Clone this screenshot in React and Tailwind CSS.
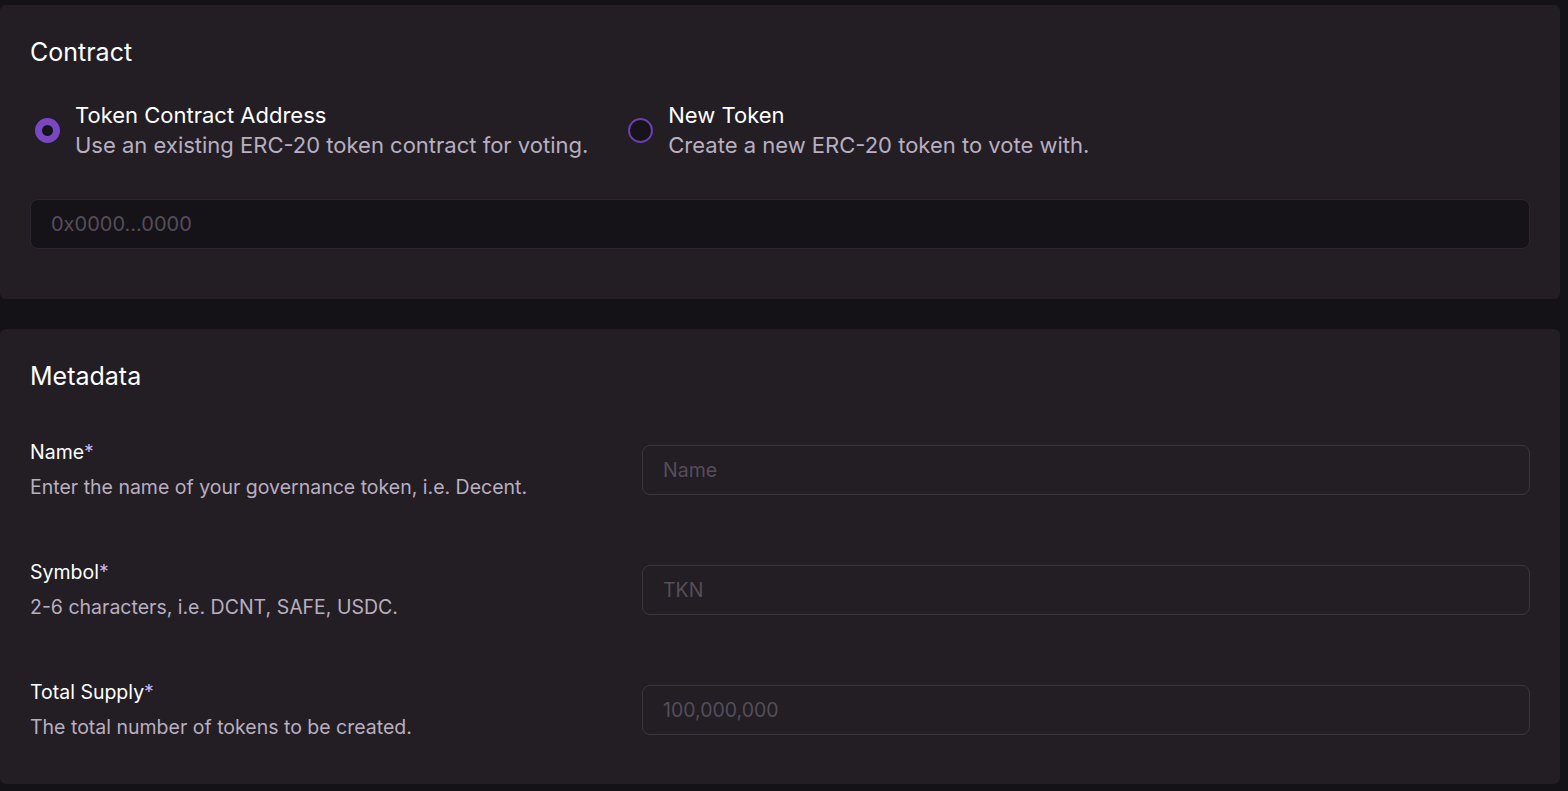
import React, { useState } from 'react';

const font = { fontFamily: 'Inter, "Noto Sans", sans-serif' };

const Radio = ({ checked }) => (
  <span
    className={`w-[25px] h-[25px] rounded-full shrink-0 box-border ${
      checked ? 'border-[7px] border-[#7a47c2] bg-[#16131a]' : 'border-2 border-[#6c3db3] bg-[#16131a]'
    }`}
  />
);

const fields = [
  { label: 'Name', help: 'Enter the name of your governance token, i.e. Decent.', placeholder: 'Name' },
  { label: 'Symbol', help: '2-6 characters, i.e. DCNT, SAFE, USDC.', placeholder: 'TKN' },
  { label: 'Total Supply', help: 'The total number of tokens to be created.', placeholder: '100,000,000' },
];

export default function App() {
  const [choice, setChoice] = useState('existing');

  return (
    <div className="min-h-[791px] w-full bg-[#141217] pt-[5px] pr-[8px] pb-[6px]" style={font}>
      {/* Contract card */}
      <div className="bg-[#221e24] rounded-[6px] px-[30px] pt-[31px] pb-[50px]">
        <h2 className="text-[25px] leading-[32px] text-white">Contract</h2>
        <div className="mt-[32px] flex items-center gap-[40px]">
          <label className="flex items-center gap-[15px] pl-[5px] cursor-pointer" onClick={() => setChoice('existing')}>
            <Radio checked={choice === 'existing'} />
            <div>
              <div className="text-[22px] leading-[30px] text-white">Token Contract Address</div>
              <div className="text-[22px] leading-[30px] text-[#b9afc0]">Use an existing ERC-20 token contract for voting.</div>
            </div>
          </label>
          <label className="flex items-center gap-[15px] cursor-pointer" onClick={() => setChoice('new')}>
            <Radio checked={choice === 'new'} />
            <div>
              <div className="text-[22px] leading-[30px] text-white">New Token</div>
              <div className="text-[22px] leading-[30px] text-[#b9afc0]">Create a new ERC-20 token to vote with.</div>
            </div>
          </label>
        </div>
        <input
          placeholder="0x0000...0000"
          className="mt-[39px] block w-full h-[50px] rounded-[8px] bg-[#151317] border border-[#2b2730] px-[20px] text-[20px] text-white placeholder:text-[#554d5b] outline-none"
        />
      </div>

      {/* Metadata card */}
      <div className="mt-[30px] bg-[#221e24] rounded-[6px] px-[30px] pt-[31px] pb-[43px]">
        <h2 className="text-[25px] leading-[32px] text-white">Metadata</h2>
        <div className="mt-[46px] flex flex-col gap-[57px]">
          {fields.map((f) => (
            <div key={f.label} className="grid grid-cols-[582px_1fr] gap-[30px] items-center">
              <div>
                <div className="text-[19.5px] leading-[28px] text-white">
                  {f.label}<span className="text-[#c9b6f2]">*</span>
                </div>
                <div className="mt-[7px] text-[19.5px] leading-[28px] text-[#b9afc0]">{f.help}</div>
              </div>
              <input
                placeholder={f.placeholder}
                className="block w-full h-[50px] rounded-[8px] bg-transparent border border-[#3b363e] px-[20px] text-[19.5px] text-white placeholder:text-[#554d5b] outline-none"
              />
            </div>
          ))}
        </div>
      </div>
    </div>
  );
}
